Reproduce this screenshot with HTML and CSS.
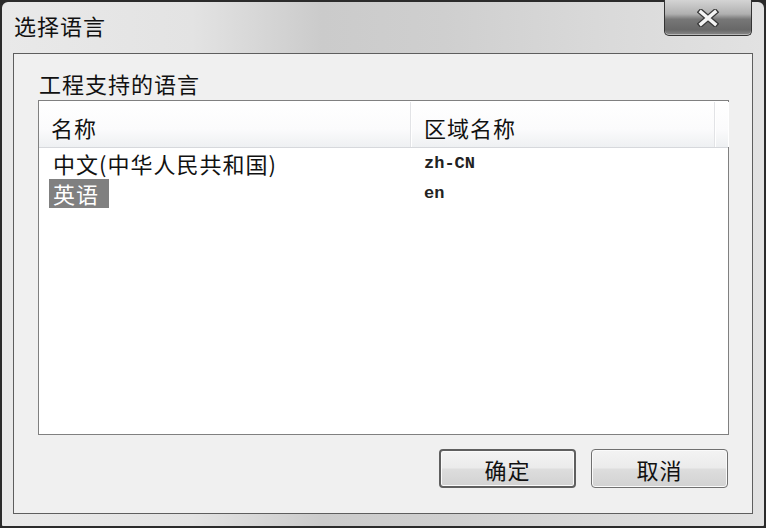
FILE: index.html
```html
<!DOCTYPE html>
<html lang="zh-CN">
<head>
    <meta charset="UTF-8">
    <title>选择语言</title>
    <link rel="stylesheet" href="styles.css">
</head>
<body>
    <div class="window">
        <div class="titlebar">
            <span class="title">选择语言</span>
            <button class="close" aria-label="关闭">
                <svg width="22" height="18" viewBox="0 0 22 18">
                    <path d="M4 3 L18 15 M18 3 L4 15" stroke="#3a3a3a" stroke-width="6" stroke-linecap="square"/>
                    <path d="M4 3 L18 15 M18 3 L4 15" stroke="#f4f4f4" stroke-width="3.4" stroke-linecap="square"/>
                </svg>
            </button>
        </div>

        <div class="client">
            <div class="group-label">工程支持的语言</div>

            <div class="listbox">
                <div class="list-head">
                    <div class="col col-name">名称</div>
                    <div class="col col-code">区域名称</div>
                    <div class="col col-rest"></div>
                </div>
                <div class="list-row">
                    <div class="cell"><span class="item">中文(中华人民共和国)</span></div>
                    <div class="cell code">zh-CN</div>
                </div>
                <div class="list-row">
                    <div class="cell"><span class="item selected">英语</span></div>
                    <div class="cell code">en</div>
                </div>
            </div>

            <div class="buttons">
                <button class="btn default">确定</button>
                <button class="btn">取消</button>
            </div>
        </div>
    </div>
</body>
</html>
```

FILE: styles.css
```css
body {
    margin: 0;
    font-family: "Noto Sans CJK SC", "Liberation Sans", sans-serif;
    background: #2a2a2a;
}
.window {
    box-sizing: border-box;
    width: 766px;
    height: 528px;
    border: 2px solid #2b2b2b;
    border-radius: 8px 8px 3px 3px;
    padding: 0 11px 12px 11px;
    background: linear-gradient(to right, #e9e9e9 0%, #e3e3e3 25%, #cbcbcb 42%, #cfcfcf 58%, #dadada 80%, #e2e2e2 100%);
    display: flex;
    flex-direction: column;
}
.titlebar {
    height: 51px;
    display: flex;
    justify-content: space-between;
    align-items: flex-start;
}
.title {
    font-size: 22px;
    letter-spacing: 1px;
    line-height: 24px;
    color: #111;
    margin-top: 11px;
    margin-left: 1px;
}
.close {
    width: 88px;
    height: 36px;
    margin-top: -2px;
    margin-right: 1px;
    padding: 0;
    border: 1px solid #333;
    border-top: none;
    border-radius: 0 0 5px 5px;
    background: linear-gradient(to bottom, #d4d4d4 0%, #b0b0b0 40%, #777 55%, #686868 85%, #8a8a8a 100%);
    box-shadow: inset 0 -1px 0 #b8b8b8;
    display: flex;
    align-items: center;
    justify-content: center;
}
.client {
    flex: 1;
    border: 1px solid #5e5e5e;
    background: #f0f0f0;
    display: flex;
    flex-direction: column;
}
.group-label {
    font-size: 22px;
    letter-spacing: 1px;
    line-height: 24px;
    color: #111;
    padding: 17px 0 0 25px;
    height: 29px;
}
.listbox {
    margin-left: 24px;
    width: 689px;
    height: 333px;
    border: 1px solid #808080;
    background: #fff;
    font-size: 22px;
    letter-spacing: 1px;
    color: #111;
}
.list-head {
    display: flex;
    height: 45px;
    margin-top: 1px;
    background: linear-gradient(to bottom, #ffffff 0%, #fbfbfc 60%, #eef0f2 100%);
    border-bottom: 1px solid #d6d8dc;
}
.col {
    line-height: 45px;
    padding-top: 3px;
    height: 42px;
    border-right: 1px solid #e2e3e6;
    box-shadow: 1px 0 0 #fff;
}
.col-name {
    width: 359px;
    padding-left: 12px;
}
.col-code {
    width: 290px;
    padding-left: 13px;
}
.col-rest {
    flex: 1;
    border-right: none;
}
.list-row {
    display: flex;
    height: 30px;
    align-items: center;
}
.list-row .cell:first-child {
    width: 362px;
    padding-left: 10px;
}
.item {
    display: inline-block;
    padding: 0 3px 0 4px;
    line-height: 29px;
}
.selected {
    background: #808080;
    color: #fff;
    padding-right: 10px;
}
.code {
    padding-left: 13px;
    font-family: "Liberation Mono", monospace;
    font-weight: bold;
    font-size: 17px;
    letter-spacing: 0;
    color: #222;
}
.buttons {
    display: flex;
    justify-content: flex-end;
    gap: 15px;
    margin-top: 14px;
    margin-right: 24px;
}
.btn {
    width: 137px;
    height: 39px;
    font-family: "Noto Sans CJK SC", sans-serif;
    font-size: 22px;
    letter-spacing: 1px;
    color: #111;
    border: 1px solid #707070;
    border-radius: 4px;
    background: linear-gradient(to bottom, #f3f3f3 0%, #ebebeb 48%, #dddddd 52%, #d2d2d2 100%);
    box-shadow: inset 0 0 0 1px #fafafa;
    padding: 0;
}
.btn.default {
    border: 2px solid #5f5f5f;
}
```
